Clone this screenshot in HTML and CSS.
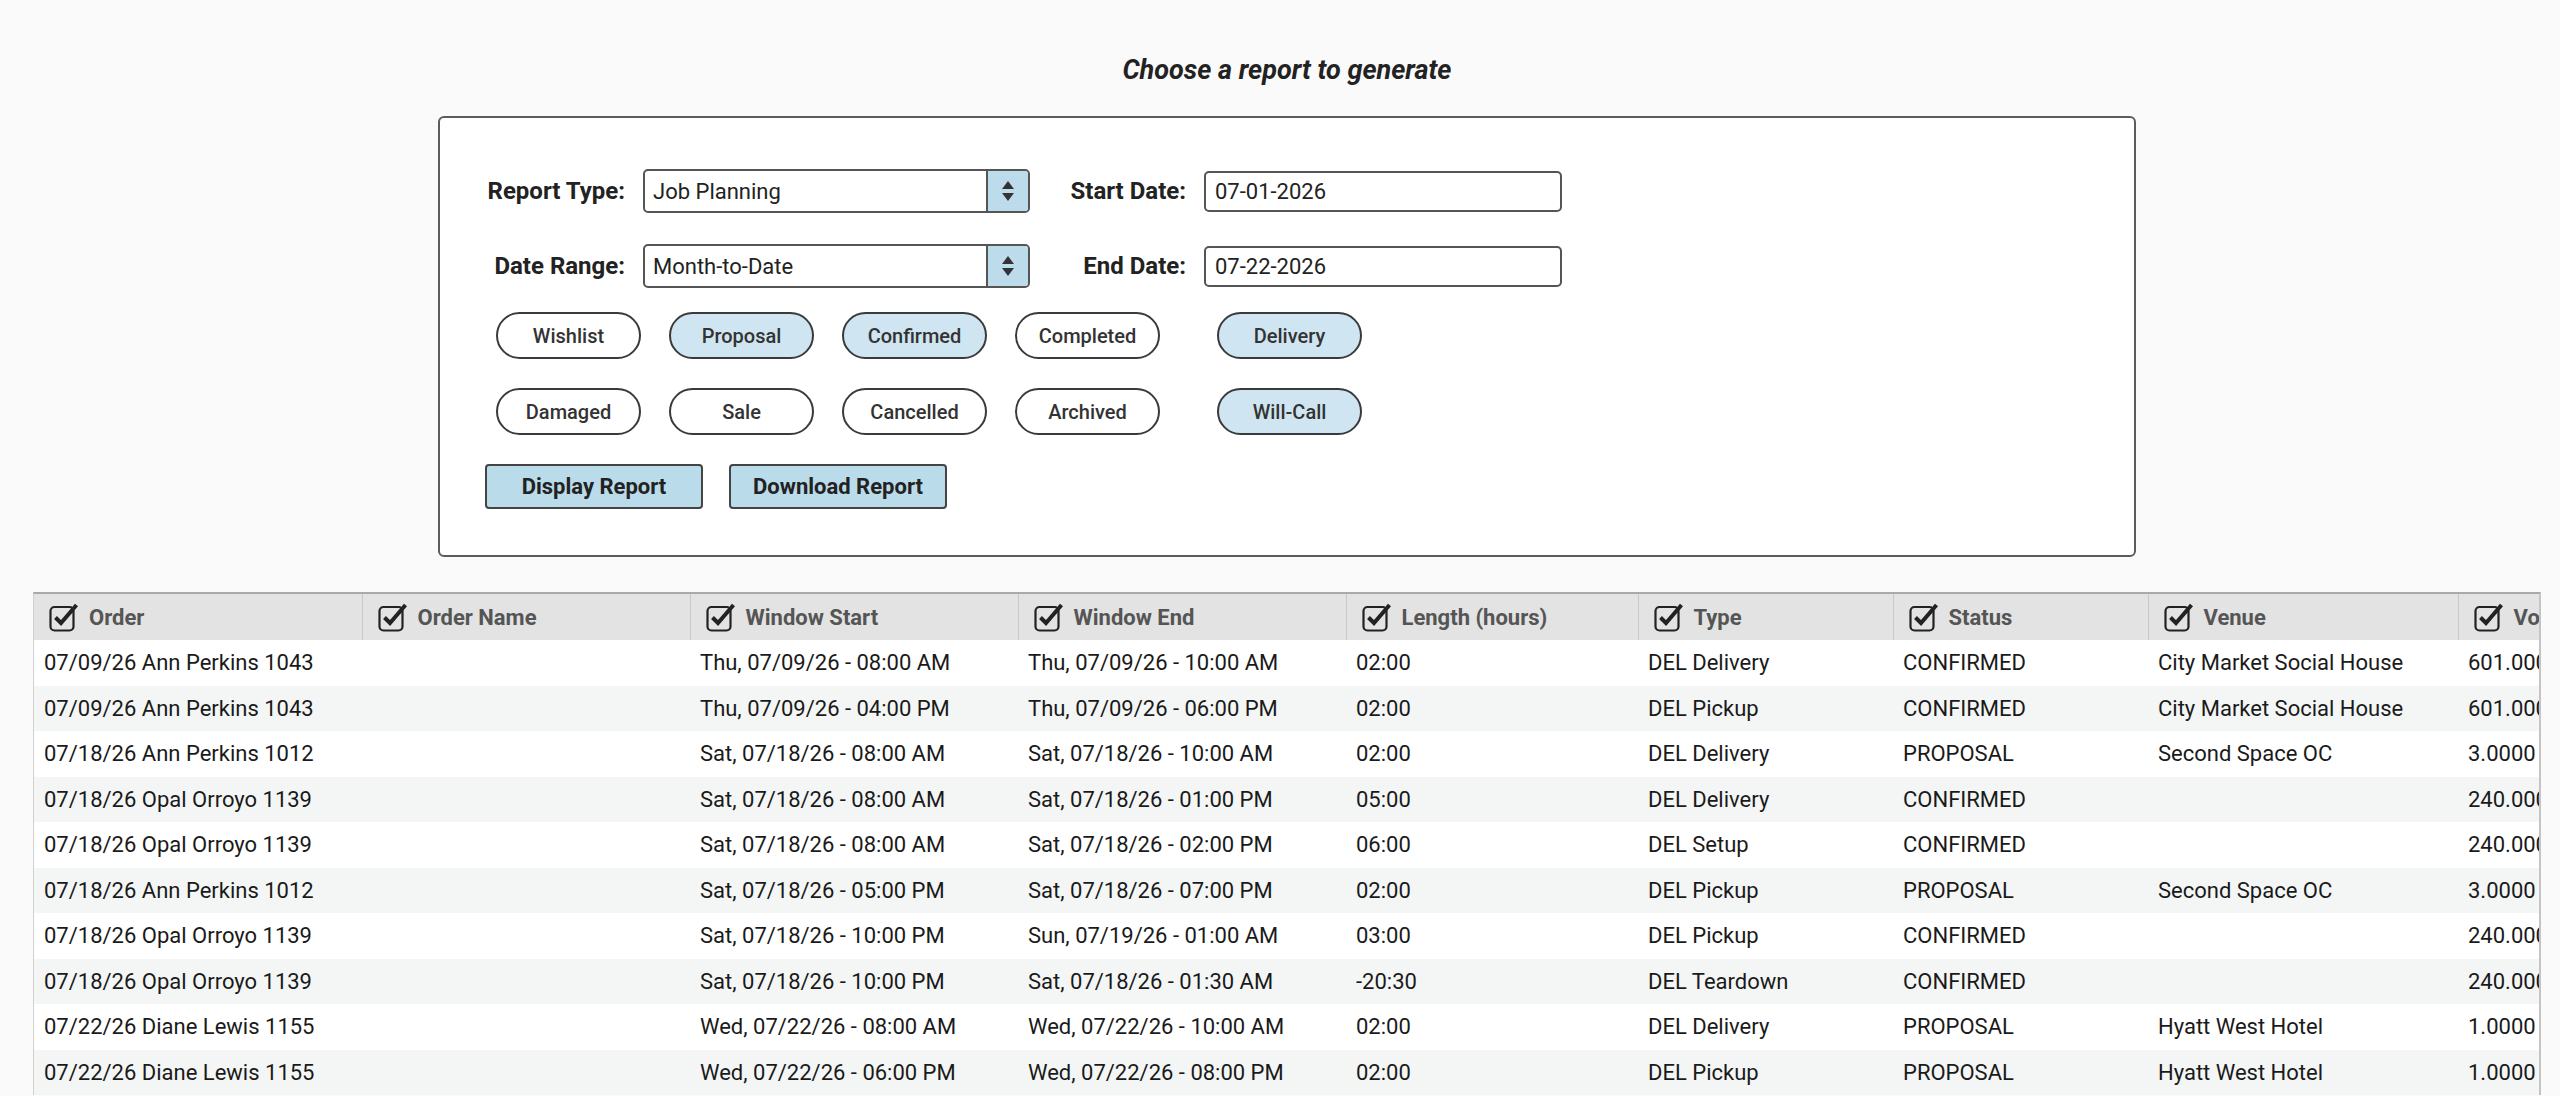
FILE: index.html
```html
<!DOCTYPE html>
<html>
<head>
<meta charset="utf-8">
<title>Reports</title>
<link rel="stylesheet" href="styles.css">
</head>
<body>
<div class="top">
  <h1 class="title">Choose a report to generate</h1>
  <div class="panel">
    <div class="form-grid">
      <label class="lbl">Report Type:</label>
      <div class="select"><span class="select-text">Job Planning</span><span class="spin"><span class="tri-up"></span><span class="tri-down"></span></span></div>
      <label class="lbl">Start Date:</label>
      <div class="input">07-01-2026</div>
      <label class="lbl">Date Range:</label>
      <div class="select"><span class="select-text">Month-to-Date</span><span class="spin"><span class="tri-up"></span><span class="tri-down"></span></span></div>
      <label class="lbl">End Date:</label>
      <div class="input">07-22-2026</div>
    </div>
    <div class="pills">
      <div class="pill-row">
        <span class="pill">Wishlist</span>
        <span class="pill on">Proposal</span>
        <span class="pill on">Confirmed</span>
        <span class="pill">Completed</span>
        <span class="pill on group2">Delivery</span>
      </div>
      <div class="pill-row">
        <span class="pill">Damaged</span>
        <span class="pill">Sale</span>
        <span class="pill">Cancelled</span>
        <span class="pill">Archived</span>
        <span class="pill on group2">Will-Call</span>
      </div>
    </div>
    <div class="actions">
      <button class="btn">Display Report</button>
      <button class="btn">Download Report</button>
    </div>
  </div>
</div>
<div class="table-wrap">
  <table class="report">
    <colgroup>
      <col class="c328"><col class="c328"><col class="c328"><col class="c328"><col class="c292"><col class="c255"><col class="c255"><col class="c310"><col class="c220">
    </colgroup>
    <thead>
      <tr>
        <th><span class="hd"><svg class="chk" viewBox="0 0 32 30"><rect x="1.5" y="5" width="23" height="23.5" rx="4" fill="none" stroke="#222" stroke-width="2.2"/><polyline points="6.5,15.5 12,21 27.5,3" fill="none" stroke="#222" stroke-width="4"/></svg>Order</span></th>
        <th><span class="hd"><svg class="chk" viewBox="0 0 32 30"><rect x="1.5" y="5" width="23" height="23.5" rx="4" fill="none" stroke="#222" stroke-width="2.2"/><polyline points="6.5,15.5 12,21 27.5,3" fill="none" stroke="#222" stroke-width="4"/></svg>Order Name</span></th>
        <th><span class="hd"><svg class="chk" viewBox="0 0 32 30"><rect x="1.5" y="5" width="23" height="23.5" rx="4" fill="none" stroke="#222" stroke-width="2.2"/><polyline points="6.5,15.5 12,21 27.5,3" fill="none" stroke="#222" stroke-width="4"/></svg>Window Start</span></th>
        <th><span class="hd"><svg class="chk" viewBox="0 0 32 30"><rect x="1.5" y="5" width="23" height="23.5" rx="4" fill="none" stroke="#222" stroke-width="2.2"/><polyline points="6.5,15.5 12,21 27.5,3" fill="none" stroke="#222" stroke-width="4"/></svg>Window End</span></th>
        <th><span class="hd"><svg class="chk" viewBox="0 0 32 30"><rect x="1.5" y="5" width="23" height="23.5" rx="4" fill="none" stroke="#222" stroke-width="2.2"/><polyline points="6.5,15.5 12,21 27.5,3" fill="none" stroke="#222" stroke-width="4"/></svg>Length (hours)</span></th>
        <th><span class="hd"><svg class="chk" viewBox="0 0 32 30"><rect x="1.5" y="5" width="23" height="23.5" rx="4" fill="none" stroke="#222" stroke-width="2.2"/><polyline points="6.5,15.5 12,21 27.5,3" fill="none" stroke="#222" stroke-width="4"/></svg>Type</span></th>
        <th><span class="hd"><svg class="chk" viewBox="0 0 32 30"><rect x="1.5" y="5" width="23" height="23.5" rx="4" fill="none" stroke="#222" stroke-width="2.2"/><polyline points="6.5,15.5 12,21 27.5,3" fill="none" stroke="#222" stroke-width="4"/></svg>Status</span></th>
        <th><span class="hd"><svg class="chk" viewBox="0 0 32 30"><rect x="1.5" y="5" width="23" height="23.5" rx="4" fill="none" stroke="#222" stroke-width="2.2"/><polyline points="6.5,15.5 12,21 27.5,3" fill="none" stroke="#222" stroke-width="4"/></svg>Venue</span></th>
        <th><span class="hd"><svg class="chk" viewBox="0 0 32 30"><rect x="1.5" y="5" width="23" height="23.5" rx="4" fill="none" stroke="#222" stroke-width="2.2"/><polyline points="6.5,15.5 12,21 27.5,3" fill="none" stroke="#222" stroke-width="4"/></svg>Volume</span></th>
      </tr>
    </thead>
    <tbody>
      <tr><td>07/09/26 Ann Perkins 1043</td><td></td><td>Thu, 07/09/26 - 08:00 AM</td><td>Thu, 07/09/26 - 10:00 AM</td><td>02:00</td><td>DEL Delivery</td><td>CONFIRMED</td><td>City Market Social House</td><td>601.0000</td></tr>
      <tr><td>07/09/26 Ann Perkins 1043</td><td></td><td>Thu, 07/09/26 - 04:00 PM</td><td>Thu, 07/09/26 - 06:00 PM</td><td>02:00</td><td>DEL Pickup</td><td>CONFIRMED</td><td>City Market Social House</td><td>601.0000</td></tr>
      <tr><td>07/18/26 Ann Perkins 1012</td><td></td><td>Sat, 07/18/26 - 08:00 AM</td><td>Sat, 07/18/26 - 10:00 AM</td><td>02:00</td><td>DEL Delivery</td><td>PROPOSAL</td><td>Second Space OC</td><td>3.0000</td></tr>
      <tr><td>07/18/26 Opal Orroyo 1139</td><td></td><td>Sat, 07/18/26 - 08:00 AM</td><td>Sat, 07/18/26 - 01:00 PM</td><td>05:00</td><td>DEL Delivery</td><td>CONFIRMED</td><td></td><td>240.0000</td></tr>
      <tr><td>07/18/26 Opal Orroyo 1139</td><td></td><td>Sat, 07/18/26 - 08:00 AM</td><td>Sat, 07/18/26 - 02:00 PM</td><td>06:00</td><td>DEL Setup</td><td>CONFIRMED</td><td></td><td>240.0000</td></tr>
      <tr><td>07/18/26 Ann Perkins 1012</td><td></td><td>Sat, 07/18/26 - 05:00 PM</td><td>Sat, 07/18/26 - 07:00 PM</td><td>02:00</td><td>DEL Pickup</td><td>PROPOSAL</td><td>Second Space OC</td><td>3.0000</td></tr>
      <tr><td>07/18/26 Opal Orroyo 1139</td><td></td><td>Sat, 07/18/26 - 10:00 PM</td><td>Sun, 07/19/26 - 01:00 AM</td><td>03:00</td><td>DEL Pickup</td><td>CONFIRMED</td><td></td><td>240.0000</td></tr>
      <tr><td>07/18/26 Opal Orroyo 1139</td><td></td><td>Sat, 07/18/26 - 10:00 PM</td><td>Sat, 07/18/26 - 01:30 AM</td><td>-20:30</td><td>DEL Teardown</td><td>CONFIRMED</td><td></td><td>240.0000</td></tr>
      <tr><td>07/22/26 Diane Lewis 1155</td><td></td><td>Wed, 07/22/26 - 08:00 AM</td><td>Wed, 07/22/26 - 10:00 AM</td><td>02:00</td><td>DEL Delivery</td><td>PROPOSAL</td><td>Hyatt West Hotel</td><td>1.0000</td></tr>
      <tr><td>07/22/26 Diane Lewis 1155</td><td></td><td>Wed, 07/22/26 - 06:00 PM</td><td>Wed, 07/22/26 - 08:00 PM</td><td>02:00</td><td>DEL Pickup</td><td>PROPOSAL</td><td>Hyatt West Hotel</td><td>1.0000</td></tr>
    </tbody>
  </table>
</div>
</body>
</html>
```

FILE: styles.css
```css
html, body {
  margin: 0;
  padding: 0;
  background: #fafafa;
  font-family: Roboto, "Liberation Sans", Arial, sans-serif;
  color: #222;
  overflow: hidden;
}

.top {
  padding-left: 14px;
}

.title {
  margin: 0;
  padding-top: 54px;
  font-size: 27px;
  line-height: 32px;
  font-weight: 700;
  font-style: italic;
  text-align: center;
  color: #222;
}

.panel {
  box-sizing: border-box;
  width: 1698px;
  margin: 30px auto 0;
  background: #fff;
  border: 2px solid #5c5c5c;
  border-radius: 6px;
  padding: 51px 45px 46px;
}

.form-grid {
  display: grid;
  grid-template-columns: 140px 387px 138px 358px;
  column-gap: 18px;
  row-gap: 31px;
  align-items: center;
}

.lbl {
  text-align: right;
  font-size: 24px;
  font-weight: 700;
  color: #222;
  white-space: nowrap;
}

.select {
  box-sizing: border-box;
  height: 44px;
  display: flex;
  border: 2px solid #555;
  border-radius: 5px;
  background: #fff;
  overflow: hidden;
}

.select-text {
  flex: 1;
  display: flex;
  align-items: center;
  padding-left: 8px;
  font-size: 22px;
  color: #222;
}

.spin {
  width: 40px;
  border-left: 2px solid #555;
  background: #bcdcec;
  display: flex;
  flex-direction: column;
  align-items: center;
  justify-content: center;
  gap: 4px;
}

.tri-up {
  width: 0;
  height: 0;
  border-left: 6px solid transparent;
  border-right: 6px solid transparent;
  border-bottom: 8px solid #333;
}

.tri-down {
  width: 0;
  height: 0;
  border-left: 6px solid transparent;
  border-right: 6px solid transparent;
  border-top: 8px solid #333;
}

.input {
  box-sizing: border-box;
  height: 41px;
  border: 2px solid #555;
  border-radius: 5px;
  background: #fff;
  padding-left: 9px;
  display: flex;
  align-items: center;
  font-size: 22px;
  color: #222;
}

.pills {
  margin-top: 24px;
  margin-left: 11px;
}

.pill-row {
  display: flex;
  gap: 28px;
}

.pill-row + .pill-row {
  margin-top: 29px;
}

.pill {
  box-sizing: border-box;
  width: 145px;
  height: 47px;
  border: 2px solid #3a3a3a;
  border-radius: 24px;
  background: #fff;
  display: flex;
  align-items: center;
  justify-content: center;
  font-size: 20px;
  font-weight: 500;
  color: #333;
}

.pill.on {
  background: #cfe6f2;
}

.pill.group2 {
  margin-left: 29px;
}

.actions {
  margin-top: 29px;
  display: flex;
  gap: 26px;
}

.btn {
  box-sizing: border-box;
  width: 218px;
  height: 45px;
  margin: 0;
  padding: 0;
  border: 2px solid #444;
  border-radius: 4px;
  background: #badbea;
  font-family: Roboto, "Liberation Sans", Arial, sans-serif;
  font-size: 22px;
  font-weight: 700;
  color: #222;
}

.table-wrap {
  box-sizing: border-box;
  margin-top: 35px;
  margin-left: 33px;
  width: 2508px;
  overflow: hidden;
  border-top: 2px solid #a9a9a9;
  border-left: 1px solid #d0d0d0;
  border-right: 2px solid #c4c4c4;
}

.report {
  table-layout: fixed;
  border-collapse: collapse;
  width: 2571px;
}

.c328 { width: 328px; }
.c292 { width: 292px; }
.c255 { width: 255px; }
.c310 { width: 310px; }
.c220 { width: 220px; }

.report th {
  height: 46px;
  padding: 0 0 0 15px;
  background: #e3e3e3;
  border-right: 1px solid #c8c8c8;
  text-align: left;
  font-size: 22px;
  font-weight: 700;
  color: #555;
  white-space: nowrap;
  overflow: hidden;
}

.hd {
  display: flex;
  align-items: center;
  gap: 8px;
}

.chk {
  width: 32px;
  height: 30px;
  flex: none;
}

.report td {
  height: 45.5px;
  padding: 0 0 0 10px;
  font-size: 22px;
  color: #1a1a1a;
  white-space: nowrap;
  overflow: hidden;
  box-sizing: border-box;
}

.report tbody tr:nth-child(odd) td {
  background: #fff;
}

.report tbody tr:nth-child(even) td {
  background: #f4f6f6;
}
```
